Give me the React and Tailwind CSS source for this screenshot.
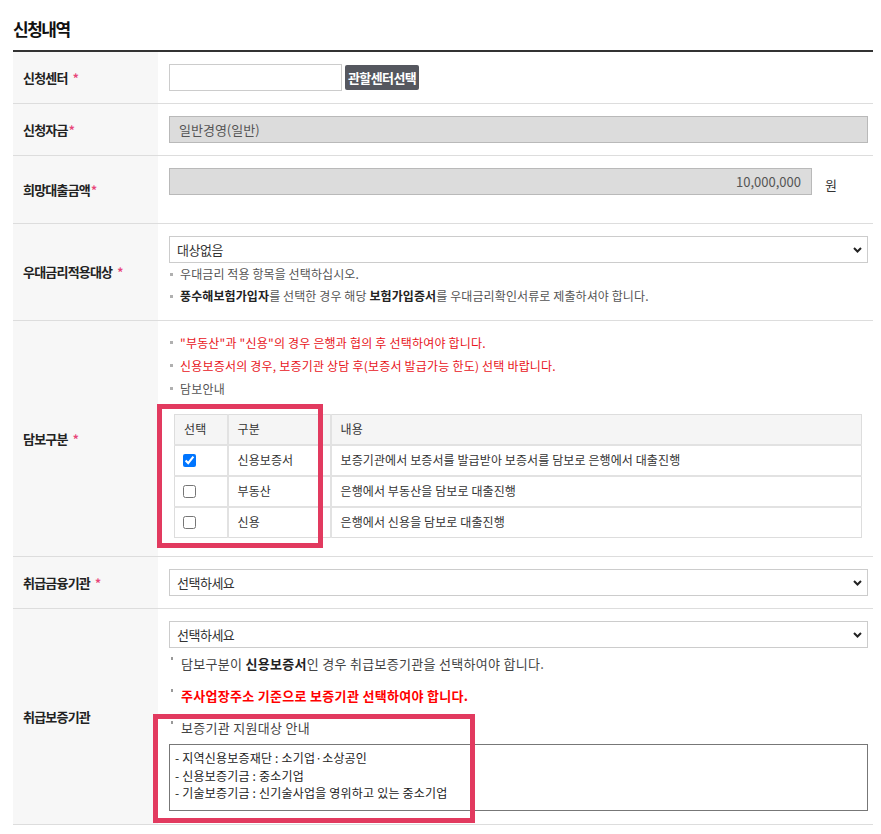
import React from 'react';

const Star = ({ gap }) => (
  <span className={gap ? 'ml-[5px] text-[12px] text-[#e8457a]' : 'ml-[1px] text-[12px] text-[#e8457a]'}>*</span>
);

const Chevron = () => (
  <svg width="9" height="6" viewBox="0 0 9 6" className="pointer-events-none absolute right-[6px] top-[11px]">
    <path d="M1 1l3.5 3.5L8 1" fill="none" stroke="#222" strokeWidth="2" />
  </svg>
);

const Select = ({ value }) => (
  <div className="relative h-[27px] w-full">
    <select className="h-full w-full appearance-none border border-[#ccc] bg-white pl-[7px] text-[13px] tracking-[-0.5px] text-[#333] outline-none">
      <option>{value}</option>
    </select>
    <Chevron />
  </div>
);

// 회색 사각 bullet 안내문
const Note = ({ children, red }) => (
  <div className={`flex items-center ${red ? 'text-[#e8141b]' : 'text-[#555]'}`}>
    <span className="mr-[7px] ml-[1px] h-[3px] w-[3px] shrink-0 bg-[#b0b0b0]" />
    <span>{children}</span>
  </div>
);

// 위쪽 점 bullet 안내문 (취급보증기관)
const TopNote = ({ children, className }) => (
  <div className={`flex items-start ${className}`}>
    <span className="mr-[8px] ml-[2px] mt-[9px] h-[3px] w-[2px] shrink-0 bg-[#999]" />
    <span>{children}</span>
  </div>
);

const Row = ({ label, req, gap, children, cell }) => (
  <div className="flex border-b border-[#ddd]">
    <div className="flex w-[145px] shrink-0 items-center bg-[#f7f7f7] pl-[10px] text-[13px] font-bold tracking-[-0.8px] text-[#222]">
      {label}
      {req && <Star gap={gap} />}
    </div>
    <div className={`relative min-w-0 flex-1 pl-[11px] pr-[5px] ${cell}`}>{children}</div>
  </div>
);

const guarantees = [
  { checked: true, type: '신용보증서', desc: '보증기관에서 보증서를 발급받아 보증서를 담보로 은행에서 대출진행' },
  { checked: false, type: '부동산', desc: '은행에서 부동산을 담보로 대출진행' },
  { checked: false, type: '신용', desc: '은행에서 신용을 담보로 대출진행' },
];

export default function App() {
  return (
    <div className="w-[881px] bg-white pb-[10px] pl-[13px] pr-[8px] pt-[17px] font-['Noto_Sans_CJK_KR','Noto_Sans',sans-serif]">
      <h2 className="pb-[9px] text-[17px] font-bold leading-[24px] tracking-[-1.5px] text-[#111]">신청내역</h2>

      <div className="border-t-2 border-[#333]">
        {/* 신청센터 */}
        <Row label="신청센터" req gap cell="py-[12px]">
          <div className="flex items-center gap-[3px]">
            <input className="h-[27px] w-[173px] border border-[#ccc] bg-white outline-none" />
            <button className="h-[25px] rounded-[2px] bg-[#55575f] px-[3px] text-[13px] font-bold leading-[25px] tracking-[-0.6px] text-white">
              관할센터선택
            </button>
          </div>
        </Row>

        {/* 신청자금 */}
        <Row label="신청자금" req cell="py-[12px]">
          <div className="h-[27px] border border-[#b9b9b9] bg-[#dcdcdc] pl-[9px] text-[13px] leading-[25px] text-[#555]">
            일반경영(일반)
          </div>
        </Row>

        {/* 희망대출금액 */}
        <Row label="희망대출금액" req cell="pt-[12px] pb-[28px]">
          <div className="flex items-center">
            <div className="h-[27px] w-[643px] border border-[#b9b9b9] bg-[#dcdcdc] pr-[10px] text-right text-[13px] leading-[25px] text-[#555]">
              10,000,000
            </div>
            <span className="ml-[13px] mt-[6px] text-[13px] text-[#333]">원</span>
          </div>
        </Row>

        {/* 우대금리적용대상 */}
        <Row label="우대금리적용대상" req gap cell="pt-[12px] pb-[13px]">
          <Select value="대상없음" />
          <div className="text-[12px] leading-[22px] tracking-[0.1px]">
            <Note>우대금리 적용 항목을 선택하십시오.</Note>
            <Note>
              <b className="text-[#222]">풍수해보험가입자</b>를 선택한 경우 해당{' '}
              <b className="text-[#222]">보험가입증서</b>를 우대금리확인서류로 제출하셔야 합니다.
            </Note>
          </div>
        </Row>

        {/* 담보구분 */}
        <Row label="담보구분" req gap cell="pt-[10px] pb-[18px]">
          <div className="text-[12px] leading-[23px] tracking-[0.2px]">
            <Note red>"부동산"과 "신용"의 경우 은행과 협의 후 선택하여야 합니다.</Note>
            <Note red>신용보증서의 경우, 보증기관 상담 후(보증서 발급가능 한도) 선택 바랍니다.</Note>
            <Note>담보안내</Note>
          </div>
          <table className="ml-[5px] mt-[14px] w-[688px] table-fixed border border-[#ddd] text-[12px] tracking-[0.1px] text-[#333]">
            <colgroup>
              <col className="w-[53px]" />
              <col className="w-[103px]" />
              <col />
            </colgroup>
            <thead>
              <tr className="h-[30px] bg-[#f5f5f5]">
                <th className="pl-[9px] text-left font-normal">선택</th>
                <th className="border-l-2 border-[#e2e2e2] pl-[9px] text-left font-normal">구분</th>
                <th className="border-l-2 border-[#e2e2e2] pl-[9px] text-left font-normal">내용</th>
              </tr>
            </thead>
            <tbody>
              {guarantees.map((g) => (
                <tr key={g.type} className="h-[31px] border-t-2 border-[#e2e2e2]">
                  <td className="pl-[8px]">
                    <input type="checkbox" defaultChecked={g.checked} className="block h-[13px] w-[13px] accent-[#0075ff]" />
                  </td>
                  <td className="border-l-2 border-[#e2e2e2] pl-[9px]">{g.type}</td>
                  <td className="border-l-2 border-[#e2e2e2] pl-[9px]">{g.desc}</td>
                </tr>
              ))}
            </tbody>
          </table>
          <div className="pointer-events-none absolute left-[-1px] top-[83px] h-[144px] w-[166px] border-[5px] border-[#e23a5f]" />
        </Row>

        {/* 취급금융기관 */}
        <Row label="취급금융기관" req gap cell="py-[12px]">
          <Select value="선택하세요" />
        </Row>

        {/* 취급보증기관 */}
        <Row label="취급보증기관" cell="pt-[12px] pb-[13px]">
          <Select value="선택하세요" />
          <div className="text-[13px] leading-[32px] tracking-[0.3px]">
            <TopNote className="text-[#444]">
              담보구분이 <b className="text-[#222]">신용보증서</b>인 경우 취급보증기관을 선택하여야 합니다.
            </TopNote>
            <TopNote className="font-bold text-[#f00]">주사업장주소 기준으로 보증기관 선택하여야 합니다.</TopNote>
            <TopNote className="text-[#444]">보증기관 지원대상 안내</TopNote>
          </div>
          <div className="border border-[#777] pb-[8px] pl-[5px] pt-[4px] text-[12px] leading-[17.5px] tracking-[0.2px] text-[#222]">
            <p>- 지역신용보증재단 : 소기업·소상공인</p>
            <p>- 신용보증기금 : 중소기업</p>
            <p>- 기술보증기금 : 신기술사업을 영위하고 있는 중소기업</p>
          </div>
          <div className="pointer-events-none absolute left-[-5px] top-[105px] h-[109px] w-[322px] border-[5px] border-[#e23a5f]" />
        </Row>
      </div>
    </div>
  );
}
